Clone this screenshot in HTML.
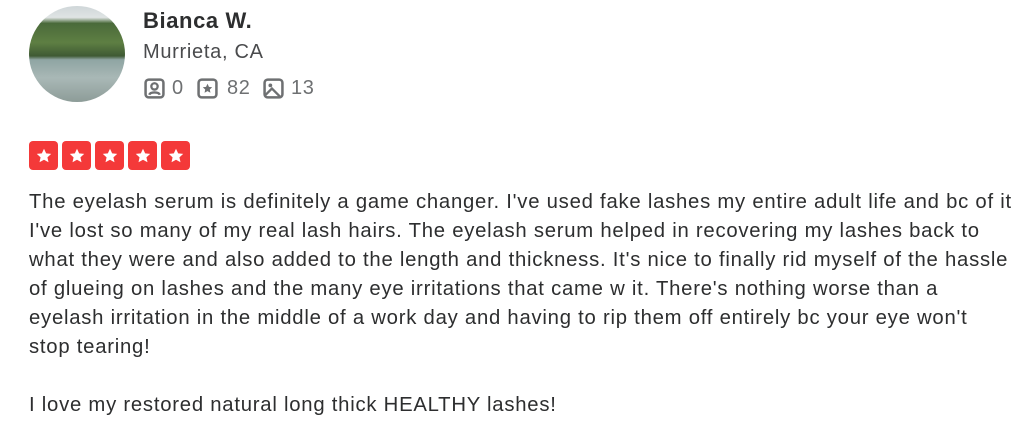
<!DOCTYPE html>
<html><head><meta charset="utf-8"><style>
body{margin:0;background:#fff;width:1019px;height:444px;overflow:hidden;font-family:"Liberation Sans",Arial,sans-serif;color:#2d2e2f}
.av{position:absolute;left:29px;top:6px;width:96px;height:96px;border-radius:50%;overflow:hidden;background:linear-gradient(#cfd6d8 0%,#dfe4e4 12%,#4a6a3a 18%,#5e7f43 38%,#3f5a34 52%,#8fa5a3 56%,#a9b8b6 75%,#8d9c98 100%)}
.name{position:absolute;left:143px;top:8px;font-weight:bold;font-size:22px;letter-spacing:0.6px}
.loc{position:absolute;left:143px;top:41px;font-size:20px;letter-spacing:0.7px;color:#4a4b4d}
.stats{position:absolute;left:143px;top:77px;font-size:20px;letter-spacing:0.6px;color:#6e7072}
.stats svg,.stats span{position:absolute;top:0}
.txt{position:absolute;left:29px;top:188px;font-size:20.3px;letter-spacing:0.76px;line-height:29px;white-space:nowrap;color:#2d2e2f}
.stars{position:absolute;left:29px;top:141px;display:flex}
.st{width:29px;height:29px;background:#f43939;border-radius:4px;margin-right:4px;display:flex;align-items:center;justify-content:center}
</style></head><body>
<div class="av"></div>
<div class="name">Bianca W.</div>
<div class="loc">Murrieta, CA</div>
<div class="stats">
<svg style="left:1px;top:1px" width="21" height="21" viewBox="0 0 20 20"><rect x="1.5" y="1.5" width="17" height="17" rx="3" fill="none" stroke="#6e7072" stroke-width="2.4"/><circle cx="10" cy="8" r="3" fill="none" stroke="#6e7072" stroke-width="2.2"/><path d="M5 16c1-3 9-3 10 0" fill="none" stroke="#6e7072" stroke-width="2.2"/></svg><span style="left:29px">0</span>
<svg style="left:54px;top:1px" width="21" height="21" viewBox="0 0 20 20"><rect x="1.5" y="1.5" width="17" height="17" rx="3" fill="none" stroke="#6e7072" stroke-width="2.4"/><path d="M10 5.5l1.4 2.9 3.1.4-2.3 2.1.6 3.1L10 12.5l-2.8 1.5.6-3.1-2.3-2.1 3.1-.4z" fill="#6e7072"/></svg><span style="left:84px">82</span>
<svg style="left:120px;top:1px" width="21" height="21" viewBox="0 0 20 20"><rect x="1.5" y="1.5" width="17" height="17" rx="3" fill="none" stroke="#6e7072" stroke-width="2.4"/><circle cx="7" cy="7" r="1.8" fill="#6e7072"/><path d="M2.5 16l6-6 8 8" fill="none" stroke="#6e7072" stroke-width="2.2"/></svg><span style="left:148px">13</span>
</div>
<div class="stars">
<div class="st"><svg width="18" height="18" viewBox="0 0 20 20"><path d="M10 2l2.4 5.1 5.6.6-4.2 3.8 1.2 5.5L10 14.2 5 17l1.2-5.5L2 7.7l5.6-.6z" fill="#fff"/></svg></div>
<div class="st"><svg width="18" height="18" viewBox="0 0 20 20"><path d="M10 2l2.4 5.1 5.6.6-4.2 3.8 1.2 5.5L10 14.2 5 17l1.2-5.5L2 7.7l5.6-.6z" fill="#fff"/></svg></div>
<div class="st"><svg width="18" height="18" viewBox="0 0 20 20"><path d="M10 2l2.4 5.1 5.6.6-4.2 3.8 1.2 5.5L10 14.2 5 17l1.2-5.5L2 7.7l5.6-.6z" fill="#fff"/></svg></div>
<div class="st"><svg width="18" height="18" viewBox="0 0 20 20"><path d="M10 2l2.4 5.1 5.6.6-4.2 3.8 1.2 5.5L10 14.2 5 17l1.2-5.5L2 7.7l5.6-.6z" fill="#fff"/></svg></div>
<div class="st"><svg width="18" height="18" viewBox="0 0 20 20"><path d="M10 2l2.4 5.1 5.6.6-4.2 3.8 1.2 5.5L10 14.2 5 17l1.2-5.5L2 7.7l5.6-.6z" fill="#fff"/></svg></div>
</div>
<div class="txt">The eyelash serum is definitely a game changer. I've used fake lashes my entire adult life and bc of it<br>I've lost so many of my real lash hairs. The eyelash serum helped in recovering my lashes back to<br>what they were and also added to the length and thickness. It's nice to finally rid myself of the hassle<br>of glueing on lashes and the many eye irritations that came w it. There's nothing worse than a<br>eyelash irritation in the middle of a work day and having to rip them off entirely bc your eye won't<br>stop tearing!<br><br>I love my restored natural long thick HEALTHY lashes!</div>
</body></html>
